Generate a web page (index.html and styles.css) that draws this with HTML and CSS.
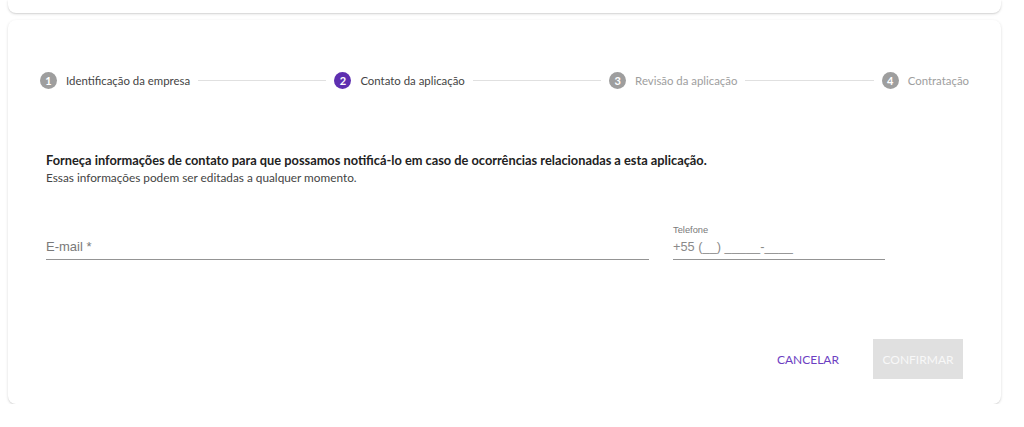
FILE: index.html
```html
<!DOCTYPE html>
<html lang="pt-BR">
<head>
<meta charset="utf-8">
<title>Contato da aplicação</title>
<link rel="stylesheet" href="styles.css">
</head>
<body>
<div class="page">
  <div class="top-card"></div>
  <div class="card">
    <div class="stepper">
      <div class="step done"><span class="num">1</span><span class="label">Identificação da empresa</span></div>
      <div class="connector"></div>
      <div class="step active"><span class="num">2</span><span class="label">Contato da aplicação</span></div>
      <div class="connector"></div>
      <div class="step todo"><span class="num">3</span><span class="label">Revisão da aplicação</span></div>
      <div class="connector"></div>
      <div class="step todo"><span class="num">4</span><span class="label">Contratação</span></div>
    </div>
    <div class="content">
      <p class="title">Forneça informações de contato para que possamos notificá-lo em caso de ocorrências relacionadas a esta aplicação.</p>
      <p class="subtitle">Essas informações podem ser editadas a qualquer momento.</p>
      <div class="fields">
        <div class="field email">
          <span class="placeholder">E-mail *</span>
        </div>
        <div class="field phone">
          <span class="small-label">Telefone</span>
          <span class="value">+55 (__) _____-____</span>
        </div>
      </div>
    </div>
    <div class="actions">
      <button class="btn-text">CANCELAR</button>
      <button class="btn-disabled">CONFIRMAR</button>
    </div>
  </div>
</div>
</body>
</html>
```
FILE: styles.css
```css
* { box-sizing: border-box; }
html, body { margin: 0; padding: 0; background: #ffffff; }
body { font-family: Lato, "Open Sans", sans-serif; color: #333; }

.page {
  padding: 0 23px 0 8px;
}

.top-card {
  height: 13px;
  background: #fff;
  border-radius: 0 0 8px 8px;
  box-shadow: 0 1px 3px rgba(0,0,0,0.14), 0 1px 1px rgba(0,0,0,0.06);
}

.card {
  margin-top: 7px;
  height: 384px;
  background: #fff;
  border-radius: 8px;
  box-shadow: 0 1px 3px rgba(0,0,0,0.14), 0 1px 1px rgba(0,0,0,0.06);
  padding: 52px 32px 25px 32px;
  display: flex;
  flex-direction: column;
}

.stepper {
  display: flex;
  align-items: center;
  height: 16px;
}

.step {
  display: flex;
  align-items: center;
  gap: 9px;
  font-size: 11.4px;
  white-space: nowrap;
}

.num {
  flex: none;
  width: 17px;
  height: 17px;
  border-radius: 50%;
  background: #9e9e9e;
  color: #fff;
  font-size: 11px;
  font-weight: 700;
  display: flex;
  align-items: center;
  justify-content: center;
}

.step.active .num { background: #5e2fb0; }
.step.done .label, .step.active .label { color: #444; }
.step.todo .label { color: #9e9e9e; }

.connector {
  flex: 1;
  height: 1px;
  background: #e0e0e0;
  margin: 0 8px;
}

.content {
  padding: 0 6px;
}

.title {
  margin: 64px 0 0;
  font-size: 12.8px;
  line-height: 16px;
  font-weight: 700;
  color: #222;
}

.subtitle {
  margin: 2px 0 0;
  font-size: 11.8px;
  line-height: 16px;
  color: #444;
}

.fields {
  display: flex;
  gap: 24px;
  margin-top: 36px;
}

.field {
  height: 38px;
  border-bottom: 1px solid #949494;
  display: flex;
  flex-direction: column;
  justify-content: flex-end;
  padding-bottom: 5px;
  font-family: "Liberation Sans", Arial, sans-serif;
}

.field.email { width: 603px; }
.field.phone { width: 212px; }

.placeholder {
  font-size: 13px;
  color: #7a7a7a;
}

.small-label {
  font-size: 9.3px;
  color: #7a7a7a;
  margin-bottom: 4px;
}

.value {
  font-size: 12.8px;
  color: #8a8a8a;
}

.actions {
  margin-top: auto;
  display: flex;
  justify-content: flex-end;
  align-items: center;
  padding-right: 6px;
}

.btn-text, .btn-disabled {
  font-family: Lato, "Open Sans", sans-serif;
  font-size: 12px;
  height: 40px;
  border: none;
  cursor: pointer;
}

.btn-text {
  background: transparent;
  color: #6d3fc2;
  padding: 0 16px;
  margin-right: 18px;
}

.btn-disabled {
  background: #e0e0e0;
  color: #f8f8f8;
  width: 90px;
  padding: 0;
}
```
